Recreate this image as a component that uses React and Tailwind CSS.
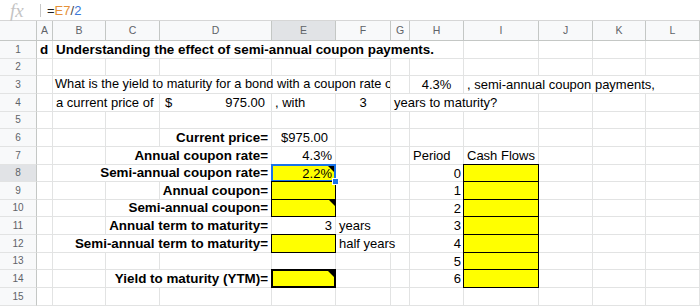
import React from "react";

const SPAN = {
  1: "col-span-1",
  2: "col-span-2",
  3: "col-span-3",
  4: "col-span-4",
  5: "col-span-5",
  6: "col-span-6",
  7: "col-span-7",
  12: "col-span-12",
};

const GRID =
  "grid grid-cols-[37px_16px_53px_54px_112px_64px_55px_19px_54px_75px_54px_53px_54px]";

const ROW_H = [
  "h-[18px]",
  "h-[17px]",
  "h-[18px]",
  "h-[18px]",
  "h-[17px]",
  "h-[18px]",
  "h-[18px]",
  "h-[17px]",
  "h-[18px]",
  "h-[17px]",
  "h-[18px]",
  "h-[18px]",
  "h-[17px]",
  "h-[18px]",
  "h-[18px]",
];

const e = (n = 1) => Array.from({ length: n }, () => ({ t: "" }));

const Tri = () => (
  <span className="absolute top-0 right-0 w-0 h-0 border-l-[6px] border-l-transparent border-t-[6px] border-t-black" />
);

function Cell({ c }) {
  const span = SPAN[c.s || 1];
  if (c.y) {
    const border =
      c.y === "sel"
        ? "border-2 border-[#1a73e8]"
        : c.y === "thick"
        ? "border-2 border-black"
        : "border border-black";
    return (
      <div
        className={`${span} relative -ml-px -mt-px bg-[#ffff00] ${border} flex items-center justify-end pr-[2px] text-[13px] leading-none text-black`}
      >
        {c.t}
        {c.tri && <Tri />}
        {c.y === "sel" && (
          <span className="absolute z-10 right-[-5px] bottom-[-5px] w-[7px] h-[7px] bg-[#1a73e8] border border-white" />
        )}
      </div>
    );
  }
  if (c.acct) {
    return (
      <div
        className={`${span} border-r border-b border-[#e2e3e3] flex items-center justify-between pl-[5px] pr-[6px] text-[13px] leading-none text-black whitespace-nowrap overflow-hidden`}
      >
        <span>$</span>
        <span>{c.t}</span>
      </div>
    );
  }
  const align =
    c.a === "r" ? "justify-end" : c.a === "c" ? "justify-center" : "justify-start";
  const size = c.b ? "font-bold text-[13.4px]" : c.sm ? "text-[12.8px]" : "text-[13px]";
  return (
    <div
      className={`${span} border-r border-b border-[#e2e3e3] flex items-center ${align} ${
        c.pr || "pr-[3px]"
      } ${c.pl || "pl-[3px]"} leading-none text-black whitespace-nowrap overflow-hidden ${size}`}
    >
      <span className="shrink-0 whitespace-pre">{c.t}</span>
    </div>
  );
}

const rows = [
  [
    { t: "d", b: true },
    { t: "Understanding the effect of semi-annual coupon payments.", b: true, s: 7 },
    ...e(4),
  ],
  [...e(12)],
  [
    ...e(1),
    {
      t: "What is the yield to maturity for a bond with a coupon rate of",
      s: 5,
      sm: true,
      pl: "pl-[2px]",
    },
    ...e(1),
    { t: "4.3%", a: "c" },
    { t: ", semi-annual coupon payments,", s: 4 },
  ],
  [
    ...e(1),
    { t: "a current price of", s: 2 },
    { t: "975.00", acct: true },
    { t: ", with" },
    { t: "3", a: "c" },
    { t: "years to maturity?", s: 3 },
    ...e(3),
  ],
  [...e(12)],
  [
    ...e(3),
    { t: "Current price=", b: true, a: "r" },
    { t: "$975.00", a: "r", pr: "pr-[7px]" },
    ...e(7),
  ],
  [
    ...e(2),
    { t: "Annual coupon rate=", b: true, a: "r", s: 2 },
    { t: "4.3%", a: "r" },
    ...e(2),
    { t: "Period" },
    { t: "Cash Flows" },
    ...e(3),
  ],
  [
    ...e(1),
    { t: "Semi-annual coupon rate=", b: true, a: "r", s: 3 },
    { t: "2.2%", y: "sel", tri: true },
    ...e(2),
    { t: "0", a: "r", pr: "pr-[2px]" },
    { t: "", y: "thin" },
    ...e(3),
  ],
  [
    ...e(3),
    { t: "Annual coupon=", b: true, a: "r" },
    { t: "", y: "thin" },
    ...e(2),
    { t: "1", a: "r", pr: "pr-[2px]" },
    { t: "", y: "thin" },
    ...e(3),
  ],
  [
    ...e(2),
    { t: "Semi-annual coupon=", b: true, a: "r", s: 2 },
    { t: "", y: "thin", tri: true },
    ...e(2),
    { t: "2", a: "r", pr: "pr-[2px]" },
    { t: "", y: "thin" },
    ...e(3),
  ],
  [
    ...e(2),
    { t: "Annual term to maturity=", b: true, a: "r", s: 2 },
    { t: "3", a: "r" },
    { t: "years" },
    ...e(1),
    { t: "3", a: "r", pr: "pr-[2px]" },
    { t: "", y: "thin" },
    ...e(3),
  ],
  [
    ...e(1),
    { t: "Semi-annual term to maturity=", b: true, a: "r", s: 3 },
    { t: "", y: "thin" },
    { t: "half years", s: 2 },
    { t: "4", a: "r", pr: "pr-[2px]" },
    { t: "", y: "thin" },
    ...e(3),
  ],
  [
    ...e(7),
    { t: "5", a: "r", pr: "pr-[2px]" },
    { t: "", y: "thin" },
    ...e(3),
  ],
  [
    ...e(2),
    { t: "Yield to maturity (YTM)=", b: true, a: "r", s: 2 },
    { t: "", y: "thick", tri: true },
    ...e(2),
    { t: "6", a: "r", pr: "pr-[2px]" },
    { t: "", y: "thin" },
    ...e(3),
  ],
  [...e(12)],
];

const COLS = ["A", "B", "C", "D", "E", "F", "G", "H", "I", "J", "K", "L"];

export default function App() {
  return (
    <div className="w-[700px] h-[306px] overflow-hidden bg-white font-['Liberation_Sans',Arial,sans-serif]">
      {/* formula bar */}
      <div className="h-[21px] flex items-center border-b border-[#d6d6d6] bg-white">
        <div className="w-[40px] flex items-center pl-[10px]">
          <span className="font-['Liberation_Serif',serif] italic text-[19px] text-[#c4c4c4] leading-none">
            fx
          </span>
        </div>
        <div className="w-px h-[13px] bg-[#c8c8c8] mr-[6px]" />
        <div className="text-[13px] leading-none">
          <span className="text-[#222]">=</span>
          <span className="text-[#e69138]">E7</span>
          <span className="text-[#444]">/</span>
          <span className="text-[#3c78d8]">2</span>
        </div>
      </div>
      {/* column header */}
      <div className={`${GRID} h-[20px]`}>
        <div className="bg-[#f8f9fa] border-r border-b border-[#c4c7c5]" />
        {COLS.map((c) => (
          <div
            key={c}
            className={`${
              c === "E" ? "bg-[#e1e3e6]" : "bg-[#f8f9fa]"
            } border-r border-b border-[#c4c7c5] flex items-center justify-center text-[10.5px] text-[#5f6368] leading-none`}
          >
            {c}
          </div>
        ))}
      </div>
      {rows.map((cells, i) => (
        <div key={i} className={`${GRID} ${ROW_H[i]}`}>
          <div
            className={`${
              i === 7 ? "bg-[#e1e3e6]" : "bg-[#f8f9fa]"
            } border-r border-[#c4c7c5] border-b-[1px] border-b-[#e2e3e3] flex items-center justify-center text-[10px] text-[#5f6368] leading-none`}
          >
            {i + 1}
          </div>
          {cells.map((c, j) => (
            <Cell key={j} c={c} />
          ))}
        </div>
      ))}
    </div>
  );
}
